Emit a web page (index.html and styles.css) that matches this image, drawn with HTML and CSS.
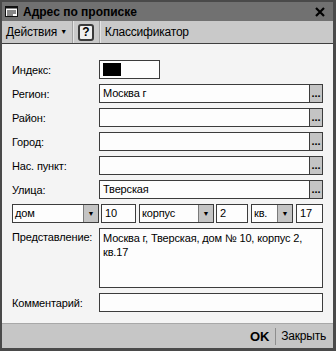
FILE: index.html
```html
<!DOCTYPE html>
<html lang="ru">
<head>
    <meta charset="UTF-8">
    <title>Адрес по прописке</title>
    <link rel="stylesheet" href="styles.css">
</head>
<body>
    <div class="window">
        <!-- Title bar -->
        <div class="title-bar">
            <svg class="title-icon" width="13" height="11" viewBox="0 0 13 11">
                <rect x="0.5" y="0.5" width="12" height="10" fill="#fff" stroke="#111"/>
                <rect x="0.5" y="0.5" width="12" height="2" fill="#111"/>
                <line x1="2" y1="5" x2="11" y2="5" stroke="#111"/>
                <line x1="2" y1="7" x2="11" y2="7" stroke="#111"/>
                <line x1="2" y1="9" x2="8" y2="9" stroke="#111"/>
            </svg>
            <span class="title-text">Адрес по прописке</span>
            <svg class="close-btn" width="10" height="10" viewBox="0 0 10 10">
                <path d="M1 1 L9 9 M9 1 L1 9" stroke="#000" stroke-width="2.2"/>
            </svg>
        </div>

        <!-- Toolbar -->
        <div class="toolbar">
            <span class="tool">Действия <span class="caret">&#9660;</span></span>
            <span class="sep"></span>
            <span class="help-btn">?</span>
            <span class="sep"></span>
            <span class="tool">Классификатор</span>
        </div>

        <!-- Form -->
        <div class="form">
            <div class="row">
                <label>Индекс:</label>
                <div class="field index-field"><span class="mask"></span></div>
            </div>
            <div class="row">
                <label>Регион:</label>
                <div class="field grow">Москва г</div>
                <span class="dots">...</span>
            </div>
            <div class="row">
                <label>Район:</label>
                <div class="field grow"></div>
                <span class="dots">...</span>
            </div>
            <div class="row">
                <label>Город:</label>
                <div class="field grow"></div>
                <span class="dots">...</span>
            </div>
            <div class="row">
                <label>Нас. пункт:</label>
                <div class="field grow"></div>
                <span class="dots">...</span>
            </div>
            <div class="row">
                <label>Улица:</label>
                <div class="field grow">Тверская</div>
                <span class="dots">...</span>
            </div>
            <div class="row combos">
                <div class="combo combo-dom"><span class="combo-text">дом</span><span class="arrow">&#9660;</span></div>
                <div class="field num-dom">10</div>
                <div class="combo combo-korp"><span class="combo-text">корпус</span><span class="arrow">&#9660;</span></div>
                <div class="field num-korp">2</div>
                <div class="combo combo-kv"><span class="combo-text">кв.</span><span class="arrow">&#9660;</span></div>
                <div class="field grow">17</div>
            </div>
            <div class="row view-row">
                <label>Представление:</label>
                <div class="field grow view">Москва г, Тверская, дом № 10, корпус 2, кв.17</div>
            </div>
            <div class="row">
                <label>Комментарий:</label>
                <div class="field grow"></div>
            </div>
        </div>

        <!-- Footer -->
        <div class="footer">
            <span class="ok">OK</span>
            <span class="footer-sep"></span>
            <span class="close">Закрыть</span>
        </div>
    </div>
</body>
</html>
```

FILE: styles.css
```css
body {
    margin: 0;
    padding: 0;
    font-family: "Liberation Sans", Arial, sans-serif;
    font-size: 12px;
    color: #000;
}

.window {
    width: 336px;
    height: 351px;
    box-sizing: border-box;
    border: 2px solid #4a4a4a;
    border-right-width: 3px;
    border-bottom-width: 3px;
    background-color: #f4f4f4;
    display: flex;
    flex-direction: column;
}

/* Title bar */
.title-bar {
    height: 19px;
    background-color: #717171;
    display: flex;
    align-items: center;
    padding: 0 8px 0 3px;
}

.title-icon {
    margin-right: 5px;
}

.title-text {
    font-weight: bold;
    flex: 1;
}

/* Toolbar */
.toolbar {
    height: 22px;
    background-color: #c9c9c9;
    border-bottom: 1px solid #3e3e3e;
    display: flex;
    align-items: center;
    padding-left: 4px;
    letter-spacing: -0.2px;
}

.caret {
    font-size: 7px;
    vertical-align: 2px;
}

.sep {
    width: 1px;
    height: 22px;
    background-color: #a2a2a2;
    border-right: 1px solid #e4e4e4;
    margin: 0 4px 0 5px;
}

.help-btn {
    width: 12px;
    height: 13px;
    border: 2px solid #3a3a3a;
    border-radius: 3px;
    background-color: #efefef;
    font-weight: bold;
    font-size: 12px;
    line-height: 13px;
    text-align: center;
}

/* Form */
.form {
    flex: 1;
    padding: 16px 10px 0 10px;
    display: flex;
    flex-direction: column;
    gap: 5px;
    font-size: 11px;
    letter-spacing: -0.15px;
}

.row {
    display: flex;
    align-items: center;
    height: 19px;
}

.row label {
    width: 87px;
    flex: none;
}

.field {
    height: 19px;
    box-sizing: border-box;
    border: 1px solid #3c3c3c;
    background-color: #fdfdfd;
    padding-left: 3px;
    line-height: 17px;
}

.grow {
    flex: 1;
}

.index-field {
    width: 61px;
    padding: 2px 3px;
}

.mask {
    display: block;
    width: 18px;
    height: 13px;
    background-color: #000;
}

.dots {
    width: 13px;
    height: 19px;
    box-sizing: border-box;
    border: 1px solid #3c3c3c;
    border-left: none;
    background-color: #c4c4c4;
    font-size: 11px;
    font-weight: bold;
    text-align: center;
    line-height: 17px;
    letter-spacing: 0;
}

/* Combo row */
.combos {
    gap: 2px;
}

.combo {
    height: 19px;
    box-sizing: border-box;
    border: 1px solid #3c3c3c;
    background-color: #fdfdfd;
    display: flex;
}

.combo-text {
    flex: 1;
    padding-left: 2px;
    line-height: 17px;
}

.arrow {
    width: 14px;
    background-color: #c4c4c4;
    border-left: 1px solid #7a7a7a;
    font-size: 7px;
    text-align: center;
    line-height: 17px;
}

.combo-dom {
    width: 87px;
}

.num-dom {
    width: 35px;
    margin-right: 1px;
}

.combo-korp {
    width: 75px;
}

.num-korp {
    width: 32px;
    margin-right: 1px;
}

.combo-kv {
    width: 42px;
    margin-right: 1px;
}

/* Presentation */
.view-row {
    height: 60px;
    align-items: flex-start;
}

.view-row label {
    padding-top: 3px;
}

.view {
    height: 60px;
    line-height: 14px;
    padding-top: 2px;
}

/* Footer */
.footer {
    height: 24px;
    background-color: #c6c6c6;
    border-top: 1px solid #a8a8a8;
    display: flex;
    align-items: center;
    justify-content: flex-end;
    padding-right: 7px;
    letter-spacing: -0.2px;
}

.ok {
    font-weight: bold;
    font-size: 13px;
}

.footer-sep {
    width: 1px;
    height: 17px;
    background-color: #8e8e8e;
    margin: 0 5px 0 6px;
}
```
